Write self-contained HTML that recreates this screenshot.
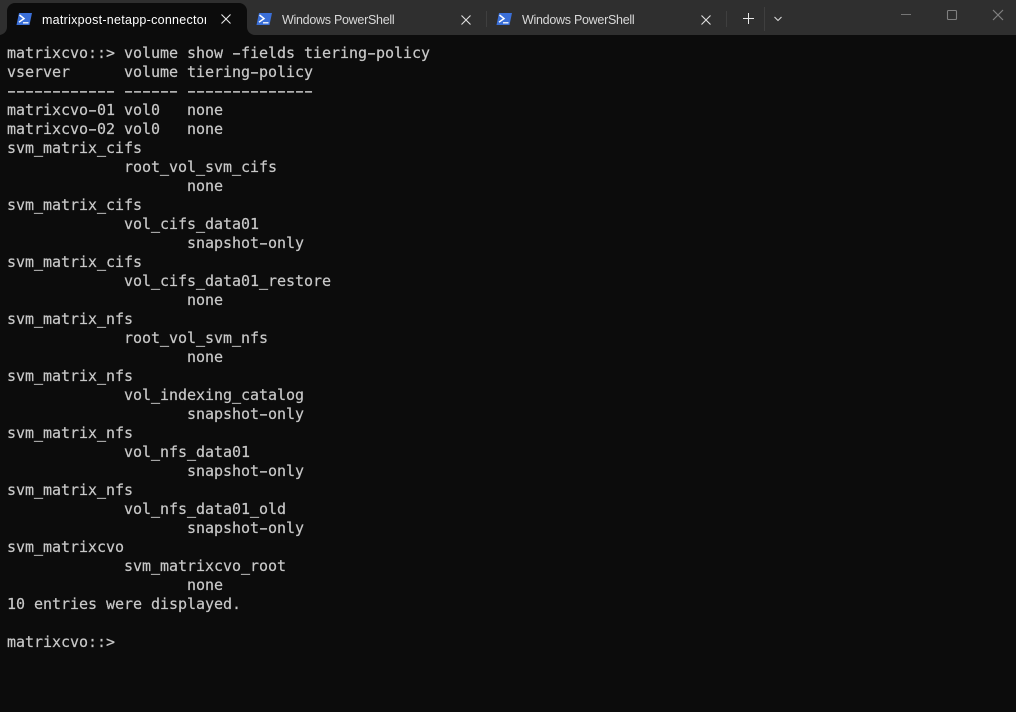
<!DOCTYPE html>
<html><head><meta charset="utf-8">
<style>
html,body{margin:0;padding:0;background:#0c0c0c}
#w{position:relative;width:1016px;height:712px;overflow:hidden;background:#0c0c0c}
#bar{position:absolute;left:0;top:0;width:1016px;height:35px;background:#2f2f2f}
#tab{position:absolute;left:7px;top:3px;width:240px;height:32px;background:#0c0c0c;border-radius:8px 8px 0 0}
.fl{position:absolute;top:27px;width:8px;height:8px;background:#0c0c0c}
.fl i{display:block;width:8px;height:8px;background:#2f2f2f}
.t{position:absolute;top:12px;font:12.5px/16px "Liberation Sans",sans-serif;letter-spacing:-.28px;color:#d8d8d8;white-space:nowrap;overflow:hidden}
svg{position:absolute;overflow:visible}
pre{position:absolute;left:7px;top:44px;margin:0;font:15px/19px "DejaVu Sans Mono","Liberation Mono",monospace;letter-spacing:-.03px;color:#c8c8c8;white-space:pre;-webkit-text-stroke:.2px #c8c8c8;filter:blur(.25px)}
pre b{display:inline-block;width:9px;font-weight:normal;transform:scaleX(1.75)}
.sep{position:absolute;width:1px;background:#3f3f3f}
</style></head><body><div id="w">
<div id="bar"></div>
<div id="tab"></div>
<div class="fl" style="left:-1px"><i style="border-bottom-right-radius:8px"></i></div>
<div class="fl" style="left:247px"><i style="border-bottom-left-radius:8px"></i></div>

<svg style="left:16px;top:13px" width="16" height="12" viewBox="0 0 16 12"><path d="M3 0H16L13.5 12H0.5Z" fill="#3a6fd8"/><path d="M3.5 2L8 5.6L3 9.2" fill="none" stroke="#fff" stroke-width="1.5"/><path d="M7 9.8H12.5" stroke="#fff" stroke-width="1.3"/></svg>
<div class="t" style="left:42px;width:164px;color:#fff;letter-spacing:.27px">matrixpost-netapp-connector</div>
<svg style="left:221px;top:14px" width="10" height="10"><path d="M.5 .5L9.5 9.5M9.5 .5L.5 9.5" stroke="#e8e8e8" stroke-width="1.1"/></svg>

<svg style="left:256px;top:13px" width="16" height="12" viewBox="0 0 16 12"><path d="M3 0H16L13.5 12H0.5Z" fill="#3a6fd8"/><path d="M3.5 2L8 5.6L3 9.2" fill="none" stroke="#fff" stroke-width="1.5"/><path d="M7 9.8H12.5" stroke="#fff" stroke-width="1.3"/></svg>
<div class="t" style="left:282px">Windows PowerShell</div>
<svg style="left:461px;top:15px" width="10" height="10"><path d="M.5 .5L9.5 9.5M9.5 .5L.5 9.5" stroke="#e0e0e0" stroke-width="1.1"/></svg>
<div class="sep" style="left:486px;top:11px;height:16px"></div>

<svg style="left:496px;top:13px" width="16" height="12" viewBox="0 0 16 12"><path d="M3 0H16L13.5 12H0.5Z" fill="#3a6fd8"/><path d="M3.5 2L8 5.6L3 9.2" fill="none" stroke="#fff" stroke-width="1.5"/><path d="M7 9.8H12.5" stroke="#fff" stroke-width="1.3"/></svg>
<div class="t" style="left:522px">Windows PowerShell</div>
<svg style="left:701px;top:15px" width="10" height="10"><path d="M.5 .5L9.5 9.5M9.5 .5L.5 9.5" stroke="#e0e0e0" stroke-width="1.1"/></svg>
<div class="sep" style="left:726px;top:11px;height:16px"></div>

<svg style="left:743px;top:13px" width="11" height="11"><path d="M5.5 0V11M0 5.5H11" stroke="#e8e8e8" stroke-width="1"/></svg>
<div class="sep" style="left:764px;top:7px;height:24px"></div>
<svg style="left:774px;top:16px" width="8" height="6"><path d="M.5 1L4 4.5L7.5 1" fill="none" stroke="#d8d8d8" stroke-width="1.1"/></svg>

<svg style="left:901px;top:14px" width="10" height="2"><path d="M0 .5H10" stroke="#767676"/></svg>
<svg style="left:947px;top:10px" width="10" height="10"><rect x=".5" y=".5" width="9" height="9" rx="1" fill="none" stroke="#808080" stroke-width="1.1"/></svg>
<svg style="left:993px;top:10px" width="10" height="10"><path d="M0 0L10 10M10 0L0 10" stroke="#808080" stroke-width="1.2"/></svg>

<pre>matrixcvo::&gt; volume show <b>-</b>fields tiering<b>-</b>policy
vserver      volume tiering<b>-</b>policy
<b>-</b><b>-</b><b>-</b><b>-</b><b>-</b><b>-</b><b>-</b><b>-</b><b>-</b><b>-</b><b>-</b><b>-</b> <b>-</b><b>-</b><b>-</b><b>-</b><b>-</b><b>-</b> <b>-</b><b>-</b><b>-</b><b>-</b><b>-</b><b>-</b><b>-</b><b>-</b><b>-</b><b>-</b><b>-</b><b>-</b><b>-</b><b>-</b>
matrixcvo<b>-</b>01 vol0   none
matrixcvo<b>-</b>02 vol0   none
svm_matrix_cifs
             root_vol_svm_cifs
                    none
svm_matrix_cifs
             vol_cifs_data01
                    snapshot<b>-</b>only
svm_matrix_cifs
             vol_cifs_data01_restore
                    none
svm_matrix_nfs
             root_vol_svm_nfs
                    none
svm_matrix_nfs
             vol_indexing_catalog
                    snapshot<b>-</b>only
svm_matrix_nfs
             vol_nfs_data01
                    snapshot<b>-</b>only
svm_matrix_nfs
             vol_nfs_data01_old
                    snapshot<b>-</b>only
svm_matrixcvo
             svm_matrixcvo_root
                    none
10 entries were displayed.

matrixcvo::&gt;</pre>
</div></body></html>
